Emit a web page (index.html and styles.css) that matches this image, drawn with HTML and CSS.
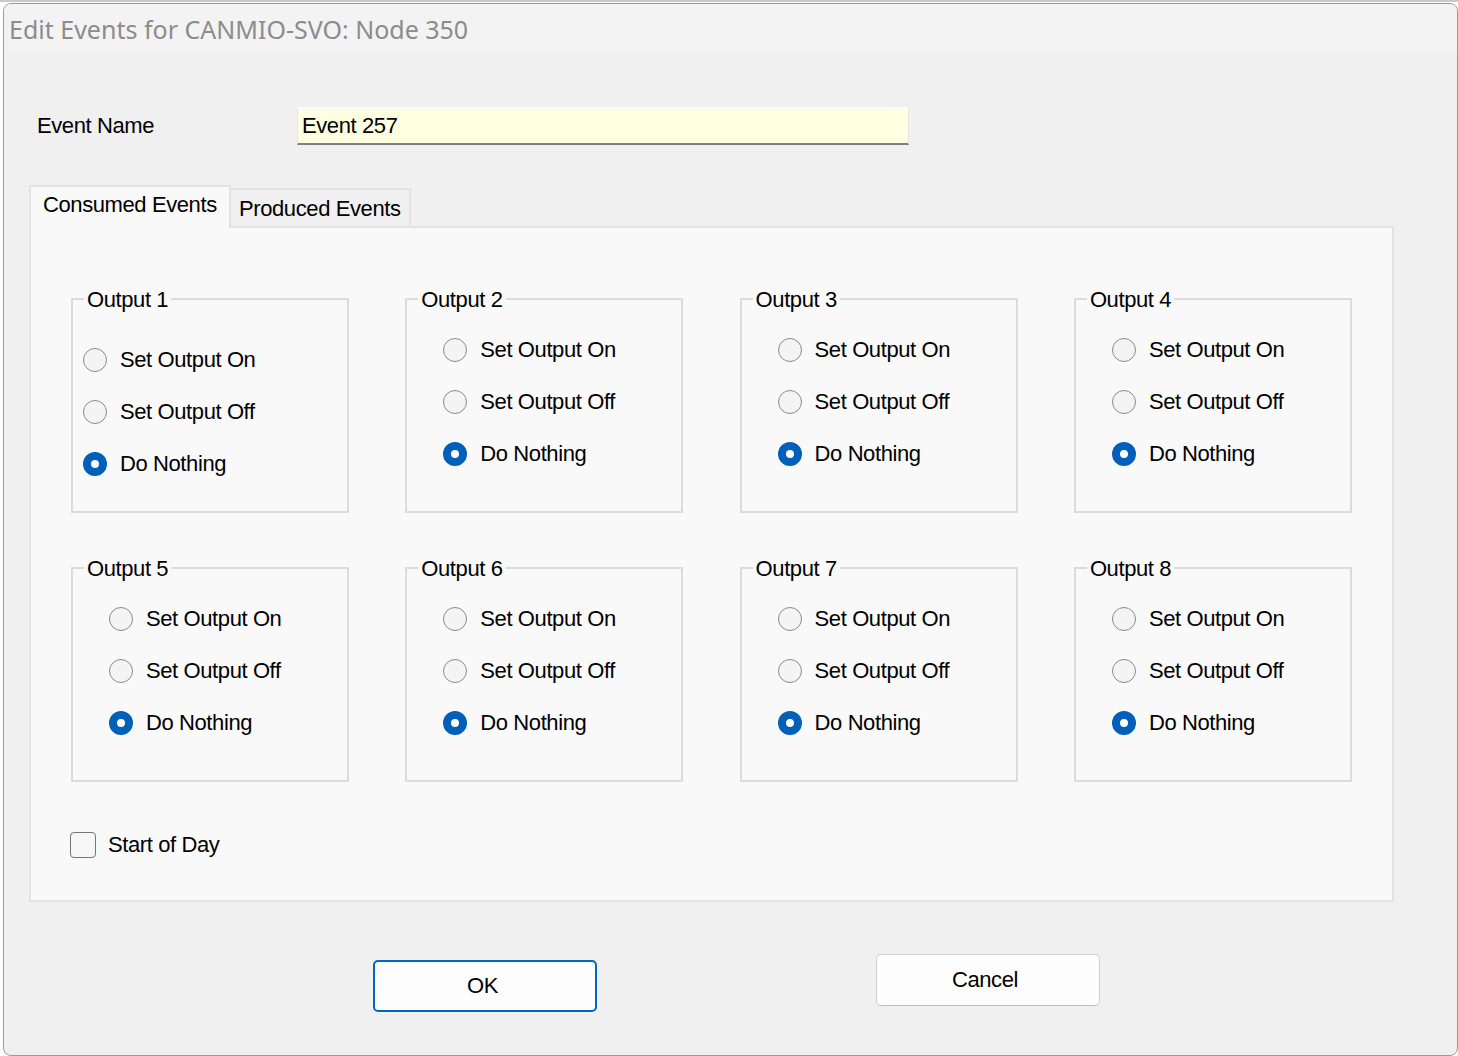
FILE: index.html
```html
<!DOCTYPE html>
<html>
<head>
<meta charset="utf-8">
<link rel="stylesheet" href="styles.css">
</head>
<body>
<div class="window">
  <div class="titlebar">Edit Events for CANMIO-SVO: Node 350</div>
  <div class="name-row">
    <span class="name-label">Event Name</span>
    <div class="textbox">Event 257</div>
  </div>
  <div class="tabs">
    <div class="tab active">Consumed Events</div>
    <div class="tab">Produced Events</div>
  </div>
  <div class="panel">
    <div class="groups">
      <div class="group first">
        <span class="legend">Output 1</span>
        <div class="opt"><span class="radio"></span>Set Output On</div>
        <div class="opt"><span class="radio"></span>Set Output Off</div>
        <div class="opt"><span class="radio on"></span>Do Nothing</div>
      </div>
      <div class="group">
        <span class="legend">Output 2</span>
        <div class="opt"><span class="radio"></span>Set Output On</div>
        <div class="opt"><span class="radio"></span>Set Output Off</div>
        <div class="opt"><span class="radio on"></span>Do Nothing</div>
      </div>
      <div class="group">
        <span class="legend">Output 3</span>
        <div class="opt"><span class="radio"></span>Set Output On</div>
        <div class="opt"><span class="radio"></span>Set Output Off</div>
        <div class="opt"><span class="radio on"></span>Do Nothing</div>
      </div>
      <div class="group">
        <span class="legend">Output 4</span>
        <div class="opt"><span class="radio"></span>Set Output On</div>
        <div class="opt"><span class="radio"></span>Set Output Off</div>
        <div class="opt"><span class="radio on"></span>Do Nothing</div>
      </div>
      <div class="group">
        <span class="legend">Output 5</span>
        <div class="opt"><span class="radio"></span>Set Output On</div>
        <div class="opt"><span class="radio"></span>Set Output Off</div>
        <div class="opt"><span class="radio on"></span>Do Nothing</div>
      </div>
      <div class="group">
        <span class="legend">Output 6</span>
        <div class="opt"><span class="radio"></span>Set Output On</div>
        <div class="opt"><span class="radio"></span>Set Output Off</div>
        <div class="opt"><span class="radio on"></span>Do Nothing</div>
      </div>
      <div class="group">
        <span class="legend">Output 7</span>
        <div class="opt"><span class="radio"></span>Set Output On</div>
        <div class="opt"><span class="radio"></span>Set Output Off</div>
        <div class="opt"><span class="radio on"></span>Do Nothing</div>
      </div>
      <div class="group">
        <span class="legend">Output 8</span>
        <div class="opt"><span class="radio"></span>Set Output On</div>
        <div class="opt"><span class="radio"></span>Set Output Off</div>
        <div class="opt"><span class="radio on"></span>Do Nothing</div>
      </div>
    </div>
    <div class="check-row"><span class="checkbox"></span>Start of Day</div>
  </div>
  <div class="buttons">
    <div class="btn ok">OK</div>
    <div class="btn cancel">Cancel</div>
  </div>
</div>
</body>
</html>
```

FILE: styles.css
```css
html, body {
  margin: 0;
  padding: 0;
}
body {
  width: 1458px;
  height: 1056px;
  overflow: hidden;
  background: #ffffff;
  border-top: 2px solid #c9c9c9;
  box-sizing: border-box;
  font-family: "Liberation Sans", Arial, sans-serif;
  font-size: 22px;
  letter-spacing: -0.4px;
  color: #000;
}
.window {
  margin: 1px 0 0 3px;
  width: 1455px;
  height: 1053px;
  box-sizing: border-box;
  border: 1px solid #9a9a9a;
  border-radius: 8px;
  background: #f0f0f0;
  overflow: hidden;
}
.titlebar {
  height: 49px;
  background: #f3f3f3;
  display: flex;
  align-items: center;
  padding-left: 5px;
  font-family: "Noto Sans", "Open Sans", sans-serif;
  font-size: 25px;
  letter-spacing: 0;
  color: #8c8c8c;
}
.name-row {
  display: flex;
  align-items: center;
  margin-top: 54px;
  padding-left: 33px;
}
.name-label {
  width: 260px;
  line-height: 24px;
}
.textbox {
  width: 612px;
  height: 38px;
  box-sizing: border-box;
  background: #ffffe1;
  border: 1px solid #e6e6e6;
  border-top: 2px solid #fbfbfb;
  border-bottom: 2px solid #7f7f7f;
  padding-left: 4px;
  display: flex;
  align-items: center;
  line-height: 24px;
}
.tabs {
  display: flex;
  align-items: flex-end;
  margin-top: 40px;
  margin-left: 25px;
}
.tab {
  box-sizing: border-box;
  height: 38px;
  width: 180px;
  padding: 7px 0 0 8px;
  line-height: 24px;
  background: #f0f0f0;
  border: 2px solid #e3e3e3;
  border-bottom: none;
  border-left: none;
}
.tab.active {
  position: relative;
  z-index: 1;
  height: 43px;
  width: 202px;
  padding: 6px 0 0 12px;
  margin-bottom: -2px;
  background: #f9f9f9;
  border: 2px solid #e3e3e3;
  border-bottom: none;
}
.panel {
  margin-left: 25px;
  width: 1365px;
  height: 676px;
  box-sizing: border-box;
  background: #f9f9f9;
  border: 2px solid #e3e3e3;
  padding: 70px 0 0 40px;
}
.groups {
  display: grid;
  grid-template-columns: repeat(4, 278px);
  grid-auto-rows: 215px;
  column-gap: 56.3px;
  row-gap: 54px;
}
.group {
  position: relative;
  box-sizing: border-box;
  border: 2px solid #dcdcdc;
  padding: 24px 0 0 36px;
}
.group.first {
  padding: 34px 0 0 10px;
}
.legend {
  position: absolute;
  left: 11px;
  top: -12px;
  padding: 0 3px;
  line-height: 24px;
  background: #f9f9f9;
}
.opt {
  height: 52px;
  display: flex;
  align-items: center;
  line-height: 24px;
}
.radio {
  width: 24px;
  height: 24px;
  box-sizing: border-box;
  border-radius: 50%;
  border: 1.5px solid #8a8a8a;
  background: #f4f4f4;
  margin-right: 13px;
  flex: none;
}
.radio.on {
  border: 8px solid #005fb8;
  background: #ffffff;
}
.check-row {
  display: flex;
  align-items: center;
  margin-top: 50px;
  margin-left: -1px;
  line-height: 24px;
}
.checkbox {
  width: 26px;
  height: 26px;
  box-sizing: border-box;
  border: 1.5px solid #767676;
  border-radius: 4px;
  background: #f6f6f6;
  margin-right: 12px;
}
.buttons {
  display: flex;
  align-items: flex-start;
  margin-top: 52px;
  padding-left: 369px;
  gap: 279px;
}
.btn {
  width: 224px;
  height: 52px;
  box-sizing: border-box;
  border-radius: 5px;
  background: #fdfdfd;
  display: flex;
  align-items: center;
  justify-content: center;
  line-height: 24px;
}
.btn.ok {
  margin-top: 6px;
  border: 2px solid #0067c0;
  padding-right: 5px;
}
.btn.cancel {
  border: 1.5px solid #d0d0d0;
  border-bottom-color: #bdbdbd;
  padding-right: 6px;
}
```
